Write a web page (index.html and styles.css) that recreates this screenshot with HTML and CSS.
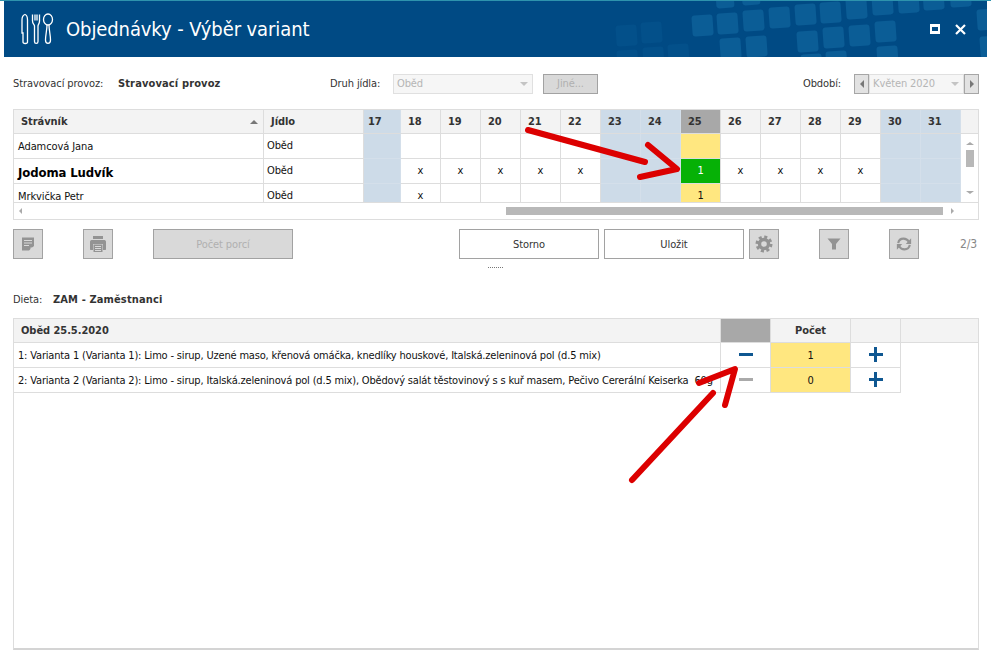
FILE: index.html
```html
<!DOCTYPE html>
<html lang="cs">
<head>
<meta charset="utf-8">
<title>Objednávky - Výběr variant</title>
<link rel="stylesheet" href="styles.css">
</head>
<body>
<div class="app">
  <div class="topline"></div>
  <header class="titlebar">
    <svg class="pattern" viewBox="4 1 983 56" aria-hidden="true">
      <g class="sq">
        <rect x="692" y="15" width="21" height="21" rx="3" transform="rotate(-4 702 25)"/>
        <rect x="717" y="13" width="21" height="21" rx="3" transform="rotate(-4 727 23)"/>
        <rect x="743" y="10" width="21" height="21" rx="3" transform="rotate(-4 753 20)"/>
        <rect x="769" y="7" width="21" height="21" rx="3" transform="rotate(-4 779 17)"/>
        <rect x="795" y="4" width="21" height="21" rx="3" transform="rotate(-4 805 14)"/>
        <rect x="820" y="2" width="21" height="21" rx="3" transform="rotate(-4 830 12)"/>
        <rect x="846" y="-2" width="21" height="21" rx="3" transform="rotate(-4 856 8)"/>
        <rect x="872" y="-6" width="21" height="21" rx="3" transform="rotate(-4 882 4)"/>
        <rect x="898" y="-8" width="21" height="21" rx="3" transform="rotate(-4 908 2)"/>
        <rect x="923" y="-11" width="21" height="21" rx="3" transform="rotate(-4 933 -1)"/>
        <rect x="950" y="-14" width="21" height="21" rx="3" transform="rotate(-4 960 -4)"/>
        <rect x="797" y="31" width="21" height="21" rx="3" transform="rotate(-4 807 41)"/>
        <rect x="823" y="27" width="21" height="21" rx="3" transform="rotate(-4 833 37)"/>
        <rect x="849" y="25" width="21" height="21" rx="3" transform="rotate(-4 859 35)"/>
        <rect x="875" y="21" width="21" height="21" rx="3" transform="rotate(-4 885 31)"/>
        <rect x="977" y="9" width="21" height="21" rx="3" transform="rotate(-4 987 19)"/>
        <rect x="720" y="38" width="21" height="21" rx="3" transform="rotate(-4 730 48)"/>
        <rect x="746" y="36" width="21" height="21" rx="3" transform="rotate(-4 756 46)"/>
        <rect x="801" y="54" width="21" height="21" rx="3" transform="rotate(-4 811 64)"/>
        <rect x="826" y="51" width="21" height="21" rx="3" transform="rotate(-4 836 61)"/>
        <rect x="877" y="46" width="21" height="21" rx="3" transform="rotate(-4 887 56)"/>
        <rect x="980" y="36" width="21" height="21" rx="3" transform="rotate(-4 990 46)"/>
        <rect x="716" y="-8" width="18" height="16" rx="3" transform="rotate(-4 725 0)"/>
        <rect x="742" y="-10" width="18" height="15" rx="3" transform="rotate(-4 751 -3)"/>
      </g>
      <g class="sq-faint">
        <rect x="616" y="25" width="21" height="21" rx="3" transform="rotate(-4 626 35)"/>
        <rect x="641" y="22" width="21" height="21" rx="3" transform="rotate(-4 651 32)"/>
        <rect x="668" y="44" width="21" height="21" rx="3" transform="rotate(-4 678 54)"/>
        <rect x="643" y="47" width="21" height="21" rx="3" transform="rotate(-4 653 57)"/>
        <rect x="617" y="50" width="21" height="21" rx="3" transform="rotate(-4 627 60)"/>
      </g>
    </svg>
    <svg class="cutlery" viewBox="0 0 34 32" aria-hidden="true">
      <path d="M3 29V20H2V7C2 4 3.500 2 5 1.500C6.500 2 7.500 4 7.500 7V29C7.500 31 3 31 3 29Z"/>
      <path d="M12.500 1.500V8C12.500 11 14.500 11.500 14.500 13V28.500C14.500 31 18 31 18 28.500V13C18 11.500 19.500 11 19.500 8V1.500M15 1.500V7.500M17 1.500V7.500"/>
      <ellipse cx="28" cy="6.500" rx="4.500" ry="5.500"/>
      <path d="M27 12C27 17 25.500 22 25.500 27C25.500 31.500 30.500 31.500 30.500 27C30.500 22 29 17 29 12"/>
    </svg>
    <h1 class="title">Objednávky - Výběr variant</h1>
    <div class="winctl">
      <span class="win-max"></span>
      <svg class="win-close" viewBox="0 0 11 11" aria-hidden="true"><path d="M1 1L10 10M10 1L1 10"/></svg>
    </div>
  </header>

  <section class="filters">
    <span class="lbl lbl-provoz">Stravovací provoz:</span>
    <strong class="val val-provoz">Stravovací provoz</strong>
    <span class="lbl lbl-druh">Druh jídla:</span>
    <div class="combo combo-druh"><span>Oběd</span><i class="caret"></i></div>
    <button class="btn btn-other" type="button">Jiné...</button>
    <span class="lbl lbl-obdobi">Období:</span>
    <button class="step" type="button"><i class="tri-l"></i></button>
    <div class="combo combo-period"><span>Květen 2020</span><i class="caret"></i></div>
    <button class="step" type="button"><i class="tri-r"></i></button>
  </section>

  <section class="frame frame-top">
    <div class="viewport">
      <table class="grid">
        <colgroup>
          <col class="c-name"><col class="c-meal"><col class="c-first">
          <col class="c-day"><col class="c-day"><col class="c-day"><col class="c-day"><col class="c-day"><col class="c-day"><col class="c-day"><col class="c-day"><col class="c-day"><col class="c-day"><col class="c-day"><col class="c-day"><col class="c-day">
          <col class="c-day"><col class="c-end">
        </colgroup>
        <thead>
          <tr>
            <th class="th-name">Strávník<i class="sort"></i></th><th class="th-meal">Jídlo</th>
            <th class="we first">17</th><th>18</th><th>19</th><th>20</th><th>21</th><th>22</th>
            <th class="we">23</th><th class="we">24</th><th class="today">25</th>
            <th>26</th><th>27</th><th>28</th><th>29</th><th class="we">30</th><th class="we">31</th><th class="th-end"></th>
          </tr>
        </thead>
        <tbody>
          <tr>
            <td class="name">Adamcová Jana</td><td class="meal">Oběd</td>
            <td class="we"></td><td></td><td></td><td></td><td></td><td></td>
            <td class="we"></td><td class="we"></td><td class="yes"></td>
            <td></td><td></td><td></td><td></td><td class="we"></td><td class="we"></td>
            <td class="vcell" rowspan="3">
              <div class="vscroll"><i class="tri-u"></i><b class="vthumb"></b><i class="tri-d"></i></div>
            </td>
          </tr>
          <tr>
            <td class="name name-strong">Jodoma Ludvík</td><td class="meal">Oběd</td>
            <td class="we"></td><td>x</td><td>x</td><td>x</td><td>x</td><td>x</td>
            <td class="we"></td><td class="we"></td><td class="sel">1</td>
            <td>x</td><td>x</td><td>x</td><td>x</td><td class="we"></td><td class="we"></td>
          </tr>
          <tr>
            <td class="name">Mrkvička Petr</td><td class="meal">Oběd</td>
            <td class="we"></td><td>x</td><td></td><td></td><td></td><td></td>
            <td class="we"></td><td class="we"></td><td class="yes">1</td>
            <td></td><td></td><td></td><td></td><td class="we"></td><td class="we"></td>
          </tr>
        </tbody>
      </table>
    </div>
    <div class="hscroll"><i class="tri-l tri-small"></i><b class="hthumb"></b><i class="tri-r tri-small"></i></div>
  </section>

  <section class="toolbar">
    <button class="btn btn-icon" type="button">
      <svg class="ico" viewBox="0 0 16 16"><path class="f" d="M2 1.500H14V10L9 14.500H2Z"/><path class="w" d="M4 4.500H12M4 7H12M4 9.500H9"/><path class="w2" d="M10.500 15V11.500H14.500"/></svg>
    </button>
    <button class="btn btn-icon gap40" type="button">
      <svg class="ico ico-lg" viewBox="0 0 18 18"><path class="f" d="M4 1H14V4H4Z"/><path class="f" d="M2.500 5H15.500C16.500 5 17 6 17 7V14C17 15 16.500 15 15.500 15H14V9H4V15H2.500C1.500 15 1 15 1 14V7C1 6 1.500 5 2.500 5Z"/><path class="f" d="M4.500 9.500H13.500V17H4.500Z"/><path class="w" d="M6 11.500H12M6 13.500H12M6 15.500H12"/></svg>
    </button>
    <button class="btn btn-count gap40" type="button">Počet porcí</button>
    <button class="btn btn-act gap-big" type="button">Storno</button>
    <button class="btn btn-act gap5" type="button">Uložit</button>
    <button class="btn btn-icon gap5" type="button">
      <svg class="ico ico-lg" viewBox="0 0 18 18"><circle class="gear-ring" cx="9" cy="9" r="4.500"/><circle class="gear-teeth" cx="9" cy="9" r="7"/></svg>
    </button>
    <button class="btn btn-icon gap40" type="button">
      <svg class="ico" viewBox="0 0 16 16"><path class="f" d="M1.500 2.500H14.500L10 8V13.500H6V8Z"/></svg>
    </button>
    <button class="btn btn-icon gap40" type="button">
      <svg class="ico ico-refresh" viewBox="0 0 18 18"><path class="s" d="M2.500 8C3 5 5.500 3 8.500 3C11 3 13 4 14.500 6.500"/><path class="f" d="M17 2.500V9H11Z"/><path class="s" d="M15.500 10C15 13 12.500 15 9.500 15C7 15 5 14 3.500 11.500"/><path class="f" d="M1 15.500V9H7Z"/></svg>
    </button>
    <span class="pager">2/3</span>
  </section>

  <div class="splitter"></div>

  <div class="diet">
    <span class="lbl lbl-diet">Dieta:</span>
    <strong class="val">ZAM - Zaměstnanci</strong>
  </div>

  <section class="frame frame-bottom">
    <table class="menu">
      <colgroup><col class="m-main"><col class="m-minus"><col class="m-count"><col class="m-plus"><col class="m-end"></colgroup>
      <thead>
        <tr><th class="m-title">Oběd 25.5.2020</th><th class="today"></th><th class="m-center">Počet</th><th></th><th class="m-last"></th></tr>
      </thead>
      <tbody>
        <tr>
          <td class="m-text">1: Varianta 1 (Varianta 1): Limo - sirup, Uzené maso, křenová omáčka, knedlíky houskové, Italská.zeleninová pol (d.5 mix)</td>
          <td class="m-op"><i class="minus"></i></td><td class="m-num">1</td><td class="m-op"><i class="plus"></i></td><td class="m-void"></td>
        </tr>
        <tr>
          <td class="m-text">2: Varianta 2 (Varianta 2): Limo - sirup, Italská.zeleninová pol (d.5 mix), Obědový salát těstovinový s s kuř masem, Pečivo Cererální Keiserka  60g</td>
          <td class="m-op"><i class="minus minus-off"></i></td><td class="m-num">0</td><td class="m-op"><i class="plus"></i></td><td class="m-void"></td>
        </tr>
      </tbody>
    </table>
  </section>

  <svg class="arrows" viewBox="0 0 991 658" aria-hidden="true">
    <path d="M528 130L645 162M648 145L677 169L640 177"/>
    <path d="M632 480L713 393M699 383L735 369L725 405"/>
  </svg>
</div>
</body>
</html>
```

FILE: styles.css
```css
* { box-sizing: border-box; }
html, body { margin: 0; padding: 0; background: #fff; }
body {
  font-family: "DejaVu Sans Condensed", "DejaVu Sans", sans-serif;
  font-stretch: condensed;
  font-size: 11px;
  letter-spacing: -0.1px;
  color: #333;
  overflow: hidden;
}
.app { position: relative; width: 991px; height: 658px; overflow: hidden; }
button { font: inherit; letter-spacing: inherit; padding: 0; margin: 0; }
i { display: block; }

.topline { height: 1px; background: #2e93ad; }

.titlebar {
  position: relative;
  height: 56px;
  margin: 0 4px;
  padding-left: 16px;
  background: #004a84;
  display: flex;
  align-items: center;
  color: #fff;
  overflow: hidden;
}
.pattern { position: absolute; left: 0; top: 0; width: 983px; height: 56px; }
.sq { fill: #0b5d96; }
.sq-faint { fill: #03508a; }
.cutlery {
  position: relative;
  width: 34px;
  height: 32px;
  fill: none;
  stroke: #fff;
  stroke-width: 1.300;
  flex: none;
}
.title {
  position: relative;
  margin: 0 0 0 12px;
  font-size: 20px;
  font-weight: 400;
  line-height: 26px;
  letter-spacing: -0.1px;
}
.winctl {
  position: relative;
  margin-left: auto;
  margin-right: 21px;
  display: flex;
  align-items: center;
  gap: 15px;
}
.win-max {
  display: block;
  width: 10px;
  height: 10px;
  border: 2px solid #fff;
  border-top-width: 3px;
  border-bottom-width: 3px;
}
.win-close { width: 11px; height: 11px; stroke: #fff; stroke-width: 2.200; fill: none; }

.filters {
  height: 52px;
  padding: 17px 12px 0 13px;
  display: flex;
  align-items: flex-start;
  line-height: 20px;
}
.lbl { display: block; }
.val { display: block; font-weight: 700; color: #333; letter-spacing: 0.13px; }
.lbl-provoz { width: 105px; }
.val-provoz { width: 212px; }
.lbl-druh { width: 63px; }
.combo {
  height: 20px;
  border: 1px solid #e0e0e0;
  background: #f6f6f6;
  color: #b5b5b5;
  padding-left: 3px;
  display: flex;
  align-items: center;
  justify-content: space-between;
  line-height: 16px;
}
.combo-druh { width: 140px; }
.combo-period { width: 95px; }
.caret {
  width: 0;
  height: 0;
  margin-right: 4px;
  border: 4px solid transparent;
  border-top: 4px solid #c4c4c4;
  border-bottom: 0;
}
.btn {
  border: 1px solid #a2a2a2;
  background: #d9d9d9;
  color: #b0b0b0;
  display: flex;
  align-items: center;
  justify-content: center;
  border-radius: 0;
}
.btn-other { width: 55px; height: 20px; margin-left: 10px; margin-right: 205px; }
.lbl-obdobi { width: 51px; }
.step {
  width: 15px;
  height: 20px;
  border: 1px solid #a6a6a6;
  background: #e2e2e2;
  display: flex;
  align-items: center;
  justify-content: center;
}
.tri-l, .tri-r, .tri-u, .tri-d { width: 0; height: 0; border: 4px solid transparent; }
.tri-l { border-left: 0; border-right: 4px solid #777; }
.tri-r { border-right: 0; border-left: 4px solid #777; }
.tri-u { border-top: 0; border-bottom: 3px solid #aaa; }
.tri-d { border-bottom: 0; border-top: 3px solid #aaa; }
.tri-small { border-width: 3px; border-left-color: #999; border-right-color: #999; }
.hscroll .tri-l { border-left: 0; border-right: 3px solid #aaa; }
.hscroll .tri-r { border-right: 0; border-left: 3px solid #aaa; }

.frame { margin: 0 12px 0 13px; border: 1px solid #ddd; }
.frame-top { height: 111px; }
.viewport { height: 93px; overflow: hidden; border-bottom: 1px solid #ddd; }
table { border-collapse: separate; border-spacing: 0; table-layout: fixed; }
.grid { width: 964px; }
.c-name { width: 250px; }
.c-meal { width: 100px; }
.c-first { width: 37px; }
.c-day { width: 40px; }
.c-end { width: 17px; }
.grid th, .menu th {
  height: 24px;
  padding: 0;
  background: #f3f3f3;
  border-right: 1px solid #ddd;
  border-bottom: 1px solid #ddd;
  font-size: 11px;
  font-weight: 700;
  color: #333;
  text-align: left;
  letter-spacing: -0.05px;
}
.grid th { padding-left: 7px; }
.grid td {
  height: 25px;
  padding: 0;
  border-right: 1px solid #ddd;
  border-bottom: 1px solid #ddd;
  text-align: center;
  color: #111;
  vertical-align: middle;
  line-height: 14px;
}
.grid th.th-name { position: relative; padding-left: 7px; }
.grid th.first { padding-left: 4px; }
.grid th.th-end { border-right: 0; padding: 0; }
.sort {
  position: absolute;
  right: 5px;
  top: 10px;
  width: 0;
  height: 0;
  border: 4px solid transparent;
  border-top: 0;
  border-bottom: 4px solid #777;
}
.grid th.we, .grid td.we { background: #cddbe8; border-right-color: #d4dfea; border-bottom-color: #d4dfea; }
.grid th.we { border-bottom-color: #ddd; }
.grid th.today, .menu th.today { background: #a8a8a8; }
.grid td.yes { background: #ffe780; }
.grid td.sel { background: #06b106; color: #fff; }
.grid td.name { text-align: left; padding: 2px 0 0 4px; }
.grid td.name-strong { font-size: 13px; font-weight: 700; color: #000; padding-top: 4px; letter-spacing: -0.1px; }
.grid td.meal { text-align: left; padding-left: 3px; }
.grid td.vcell { border: 0; vertical-align: top; }
.vscroll {
  height: 69px;
  padding-top: 8px;
  display: flex;
  flex-direction: column;
  align-items: center;
  padding-left: 1px;
}
.vthumb { display: block; width: 8px; height: 17px; margin: 5px 0 24px; background: #b8b8b8; }

.hscroll { height: 16px; display: flex; align-items: center; padding: 0 24px 0 5px; }
.hthumb { display: block; width: 437px; height: 8px; margin-left: auto; margin-right: 8px; background: #b8b8b8; }

.toolbar {
  margin-top: 9px;
  padding: 0 14px 0 13px;
  height: 30px;
  display: flex;
  align-items: stretch;
}
.btn-icon { width: 30px; }
.gap40 { margin-left: 40px; }
.gap5 { margin-left: 5px; }
.gap-big { margin-left: 166px; }
.btn-count { width: 140px; }
.btn-act { width: 140px; background: #fff; color: #333; }
.ico { display: block; width: 16px; height: 16px; }
.ico-lg { width: 18px; height: 18px; }
.ico-refresh { width: 16px; height: 16px; }
.ico .f { fill: #939393; }
.ico .w { fill: none; stroke: #d9d9d9; stroke-width: 1; }
.ico .w2 { fill: #d9d9d9; stroke: none; }
.ico .s { fill: none; stroke: #939393; stroke-width: 2.400; }
.gear-ring { fill: none; stroke: #939393; stroke-width: 3.400; }
.gear-teeth { fill: none; stroke: #939393; stroke-width: 3; stroke-dasharray: 3 2.500; }
.pager { margin-left: auto; align-self: center; color: #888; font-size: 12px; }

.splitter { width: 15px; height: 1px; margin: 8px auto 0; border-top: 1px dotted #777; }

.diet { height: 50px; padding: 25px 13px 0; display: flex; line-height: 14px; }
.lbl-diet { width: 40px; }

.frame-bottom { height: 332px; border-bottom-width: 2px; border-bottom-color: #d4d4d4; }
.menu { width: 964px; }
.m-main { width: 707px; }
.m-minus { width: 50px; }
.m-count { width: 80px; }
.m-plus { width: 50px; }
.m-end { width: 77px; }
.menu th.m-title { padding-left: 7px; }
.menu th.m-center { text-align: center; }
.menu th.m-last { border-right: 0; }
.menu td {
  height: 25px;
  padding: 0;
  border-right: 1px solid #ddd;
  border-bottom: 1px solid #ddd;
  color: #111;
  vertical-align: middle;
}
.menu td.m-text { padding-left: 4px; white-space: pre; overflow: hidden; letter-spacing: -0.175px; }
.menu td.m-num { background: #ffe780; text-align: center; }
.menu td.m-void { border: 0; }
.minus, .plus { position: relative; width: 14px; height: 14px; margin: 0 auto; }
.minus::before, .plus::before {
  content: "";
  position: absolute;
  left: 0;
  top: 5px;
  width: 14px;
  height: 3px;
  background: #0f5791;
}
.plus::after {
  content: "";
  position: absolute;
  left: 5px;
  top: -1px;
  width: 3px;
  height: 15px;
  background: #0f5791;
}
.minus-off::before { background: #aaa; }

.arrows {
  position: absolute;
  left: 0;
  top: 0;
  width: 991px;
  height: 658px;
  fill: none;
  stroke: #dc0000;
  stroke-width: 6;
  stroke-linecap: round;
  stroke-linejoin: round;
  pointer-events: none;
}
```
